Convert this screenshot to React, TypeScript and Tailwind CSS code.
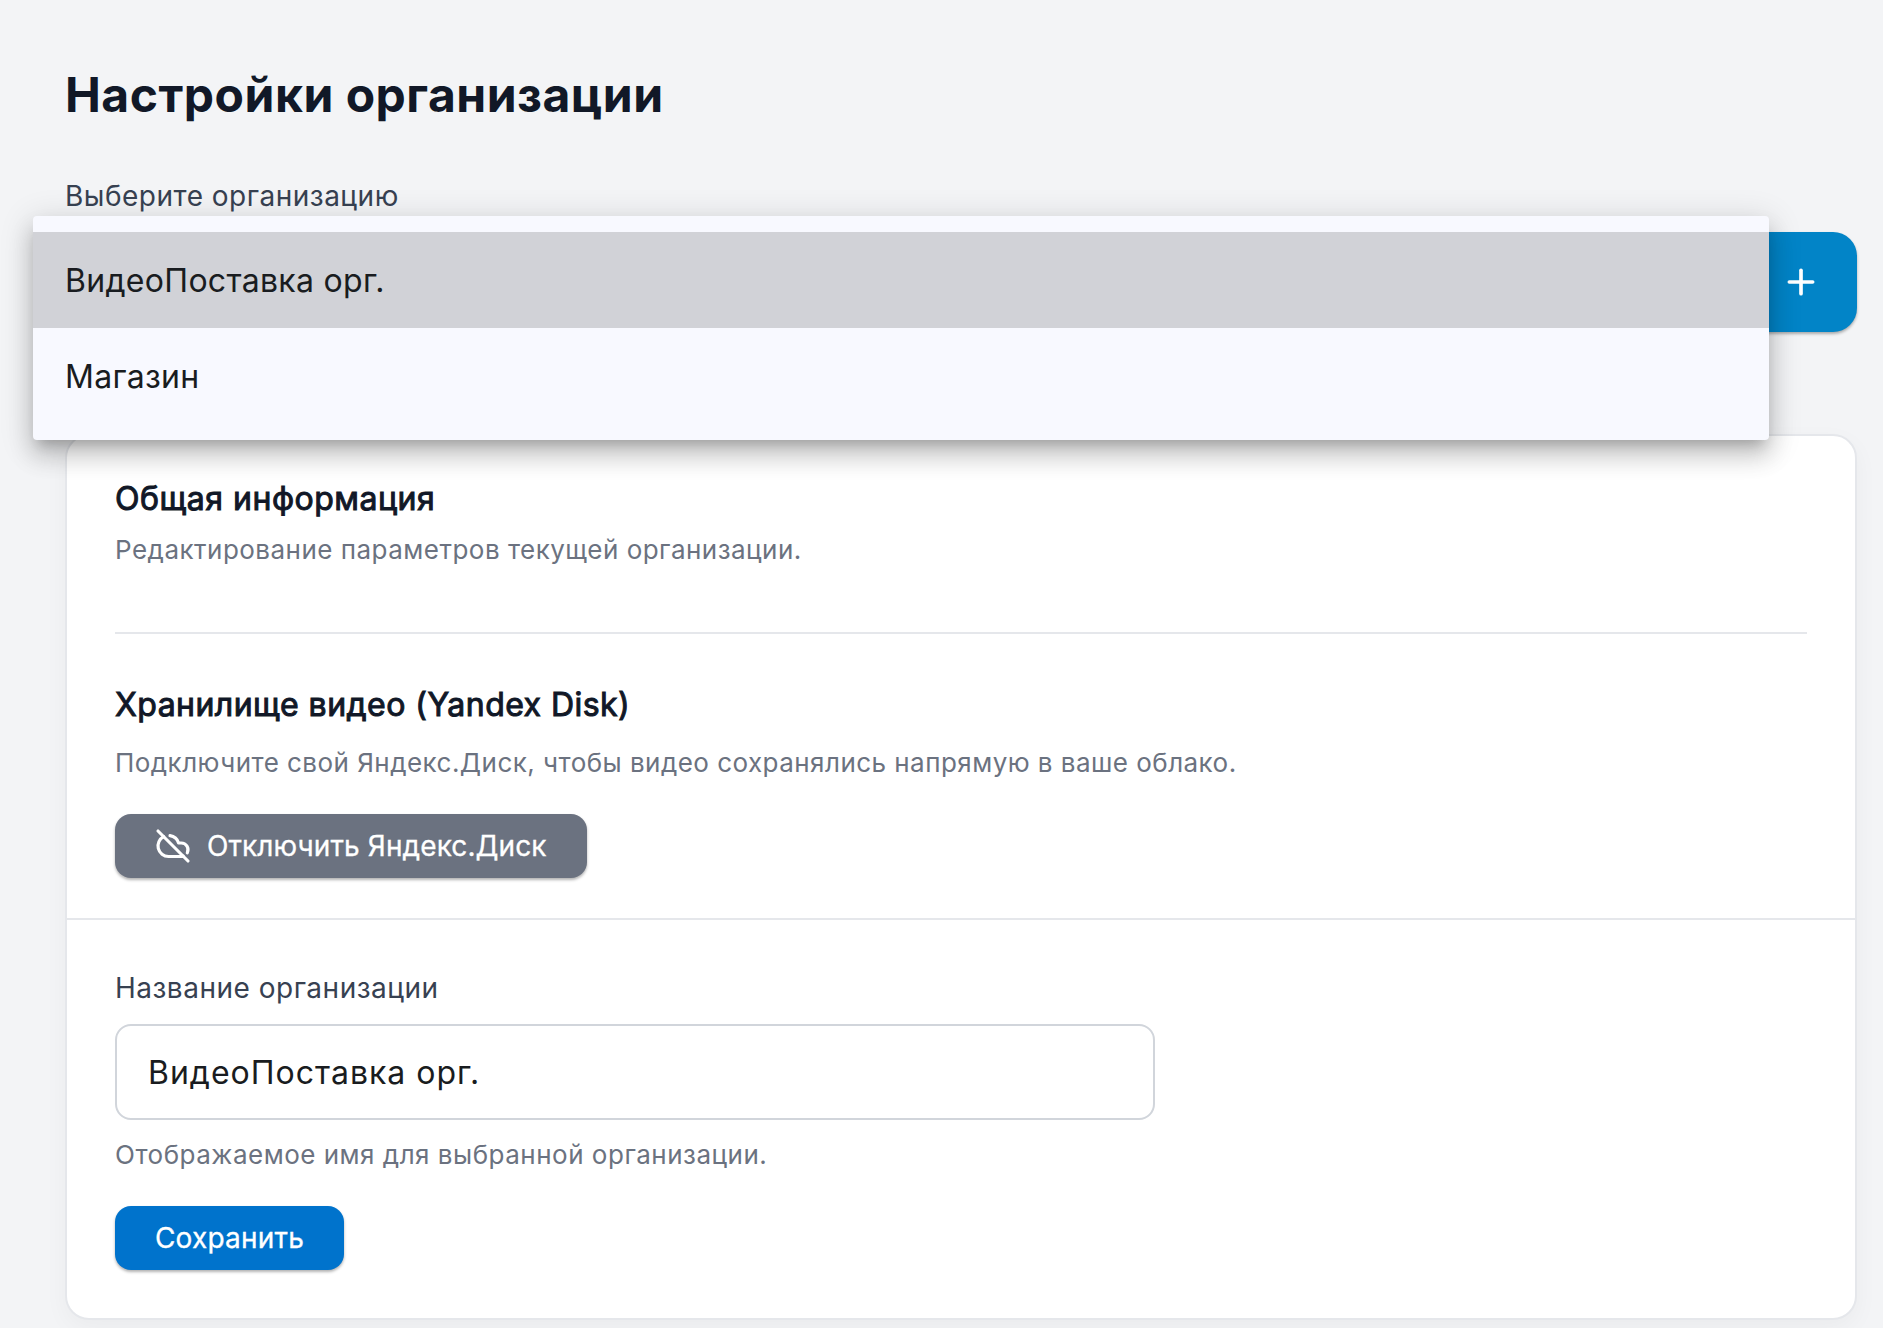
import { CloudOff, Plus } from "lucide-react";

const organizations = ["ВидеоПоставка орг.", "Магазин"];

function OrganizationMenu() {
  return (
    <ul className="absolute -top-4 -left-8 w-[1736px] h-56 py-4 rounded bg-[#f8f9ff] text-[32px] leading-[48px] tracking-[0.3px] text-[#191c20] shadow-[0_10px_12px_-6px_rgba(0,0,0,0.2),0_16px_23px_2px_rgba(0,0,0,0.14),0_6px_32px_4px_rgba(0,0,0,0.12)]">
      {organizations.map((name, i) => (
        <li key={name} className={i === 0 ? "flex items-center h-24 px-8 pt-0.5 bg-[#d1d2d7]" : "flex items-center h-24 px-8 pt-0.5"}>
          {name}
        </li>
      ))}
    </ul>
  );
}

export default function App() {
  return (
    <div className="h-[1328px] overflow-hidden bg-[#f3f4f6] pl-[65px] pr-[26px] pt-16 font-['Inter',sans-serif]">
      <h1 className="h-16 text-[48px] leading-[62px] font-bold tracking-[0.5px] text-[#111827]">Настройки организации</h1>

      {/* Organization picker */}
      <div className="mt-12 h-10 text-[28px] leading-10 tracking-[0.5px] text-[#374151]">Выберите организацию</div>
      <div className="relative z-10 mt-4 flex justify-end">
        <button className="flex items-center justify-center w-28 h-[100px] rounded-3xl bg-[#0284c7] text-white shadow-[0_2px_3px_rgba(0,0,0,0.3)]">
          <Plus className="size-10" strokeWidth={2.2} />
        </button>
        <OrganizationMenu />
      </div>

      <div className="mt-[102px] h-[886px] rounded-3xl border-2 border-[#e5e7eb] bg-white shadow-[0_8px_24px_rgba(0,0,0,0.04)]">
        <div className="px-12 pt-10 h-[482px]">
          {/* General info */}
          <h2 className="mt-px text-[32px] leading-[44px] tracking-[0.5px] text-[#111827] [-webkit-text-stroke:1px_#111827]">Общая информация</h2>
          <p className="mt-[11px] text-[26px] leading-9 tracking-[0.48px] text-[#6b7280]">Редактирование параметров текущей организации.</p>
          <hr className="mt-16 border-t-2 border-[#e5e7eb]" />

          {/* Video storage */}
          <h2 className="mt-[49px] text-[32px] leading-[44px] tracking-[0.46px] text-[#111827] [-webkit-text-stroke:1px_#111827]">Хранилище видео (Yandex Disk)</h2>
          <p className="mt-[18px] text-[26px] leading-9 tracking-[0.46px] text-[#6b7280]">Подключите свой Яндекс.Диск, чтобы видео сохранялись напрямую в ваше облако.</p>
          <button className="mt-[33px] flex items-center h-16 w-[472px] pl-10 gap-4 rounded-2xl bg-[#6b7280] text-[28px] text-white shadow-[0_2px_3px_rgba(0,0,0,0.3)]">
            <CloudOff className="size-9" strokeWidth={2.1} />
            <span className="tracking-[0.1px] [-webkit-text-stroke:0.3px_white]">Отключить Яндекс.Диск</span>
          </button>
        </div>

        {/* Name form */}
        <div className="border-t-2 border-[#e5e7eb] px-12 pt-12">
          <label className="block text-[28px] leading-10 tracking-[0.5px] text-[#374151]">Название организации</label>
          <div className="mt-4 flex items-center w-[1040px] h-24 px-[31px] pt-0.5 rounded-2xl border-2 border-[#d1d5db] text-[32px] tracking-[1px] text-[#191c20]">
            ВидеоПоставка орг.
          </div>
          <p className="mt-[17px] text-[26px] leading-9 tracking-[0.5px] text-[#6b7280]">Отображаемое имя для выбранной организации.</p>
          <button className="mt-[33px] h-16 w-[229px] rounded-2xl bg-[#0073cc] text-[28px] tracking-[0.2px] text-white [-webkit-text-stroke:0.3px_white] shadow-[0_2px_3px_rgba(0,0,0,0.3)]">
            Сохранить
          </button>
        </div>
      </div>
    </div>
  );
}
